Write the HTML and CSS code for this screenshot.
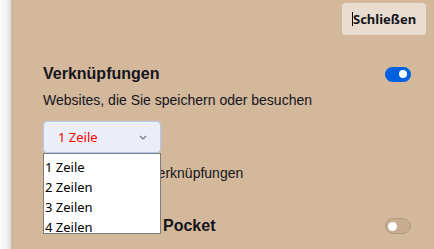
FILE: index.html
```html
<!DOCTYPE html>
<html lang="de">
<head>
<meta charset="utf-8">
<title>Einstellungen</title>
<link rel="stylesheet" href="styles.css">
</head>
<body>
  <div class="edge"></div>
  <main class="panel">
    <div class="topbar">
      <button class="close"><span class="caret"></span>Schließen</button>
    </div>
    <div class="settings">
      <section class="section first">
        <div class="section-head">
          <h2 class="title">Verknüpfungen</h2>
          <span class="toggle on"><span class="knob"></span></span>
        </div>
        <p class="desc">Websites, die Sie speichern oder besuchen</p>
        <div class="select-wrap">
          <div class="select">
            <span class="select-value">1 Zeile</span>
            <svg class="chevron" width="8" height="5" viewBox="0 0 8 5"><polyline points="1,1 4,4 7,1" fill="none" stroke="#74747a" stroke-width="1.2"/></svg>
          </div>
          <ul class="dropdown">
            <li>1 Zeile</li>
            <li>2 Zeilen</li>
            <li>3 Zeilen</li>
            <li>4 Zeilen</li>
          </ul>
        </div>
        <label class="check-row"><span class="checkbox"></span>Gesponserte Verknüpfungen</label>
      </section>
      <section class="section second">
        <div class="section-head">
          <h2 class="title">Empfohlen von Pocket</h2>
          <span class="toggle off"><span class="knob"></span></span>
        </div>
      </section>
    </div>
  </main>
</body>
</html>
```

FILE: styles.css
```css
html, body {
  margin: 0;
  padding: 0;
}
body {
  width: 434px;
  height: 249px;
  overflow: hidden;
  display: flex;
  font-family: "Liberation Sans", Arial, sans-serif;
  color: #15141a;
}
.edge {
  width: 11px;
  flex: none;
  background: linear-gradient(to right, #fbfbfc 0%, #f3f3f5 55%, #dedee2 100%);
}
.panel {
  flex: 1;
  background: #d3b89c;
  padding: 3px 8px 0 32px;
}
.topbar {
  display: flex;
  justify-content: flex-end;
}
.close {
  width: 84px;
  height: 32px;
  border: none;
  border-radius: 4px;
  background: #e9ddd0;
  color: #15141a;
  font-family: "Noto Sans", "Open Sans", sans-serif;
  font-weight: 700;
  font-size: 13px;
  padding: 0 0 0 10px;
  display: flex;
  align-items: center;
  text-align: left;
}
.caret {
  width: 1px;
  height: 14px;
  background: #000;
}
.settings {
  padding-right: 15px;
}
.section.first {
  margin-top: 29px;
}
.section.second {
  margin-top: 33px;
}
.section-head {
  display: flex;
  justify-content: space-between;
  align-items: center;
  height: 20px;
}
.title {
  margin: 0;
  font-size: 16px;
  font-weight: 700;
  line-height: 20px;
}
.toggle {
  width: 26px;
  height: 15px;
  box-sizing: border-box;
  border-radius: 8px;
  display: flex;
  align-items: center;
}
.toggle.on {
  background: #0061e0;
  justify-content: flex-end;
  padding-right: 4px;
}
.toggle.on .knob {
  width: 8px;
  height: 8px;
  border-radius: 50%;
  background: #fff;
}
.toggle.off {
  height: 16px;
  background: #c9ad90;
  border: 1px solid #b39a7f;
  padding-left: 2px;
}
.toggle.off .knob {
  width: 9px;
  height: 9px;
  border-radius: 50%;
  background: #fff;
}
.desc {
  margin: 6px 0 0;
  font-size: 14px;
  line-height: 20px;
}
.select-wrap {
  position: relative;
  width: 118px;
  margin-top: 11px;
}
.select {
  height: 32px;
  box-sizing: border-box;
  background: #ebeef6;
  border: 1px solid #aecaee;
  border-radius: 4px;
  display: flex;
  align-items: center;
  justify-content: space-between;
  padding: 0 13px 0 14px;
  font-family: "Noto Sans", sans-serif;
  font-size: 13px;
}
.select-value {
  color: #ff0000;
}
.chevron {
  display: block;
}
.dropdown {
  position: absolute;
  top: 100%;
  left: 0;
  width: 118px;
  height: 81px;
  box-sizing: border-box;
  margin: 0;
  padding: 3px 0 0 1px;
  list-style: none;
  background: #fff;
  border: 1px solid #7d7d7d;
  overflow: hidden;
  font-family: "Noto Sans", sans-serif;
  font-size: 13px;
  line-height: 20px;
  color: #000;
  z-index: 2;
}
.check-row {
  display: flex;
  align-items: center;
  margin-top: 10px;
  font-size: 14px;
  line-height: 20px;
}
.checkbox {
  width: 16px;
  height: 16px;
  box-sizing: border-box;
  border: 1px solid #8f8f9d;
  border-radius: 2px;
  background: #fff;
  margin-right: 6px;
}
```
